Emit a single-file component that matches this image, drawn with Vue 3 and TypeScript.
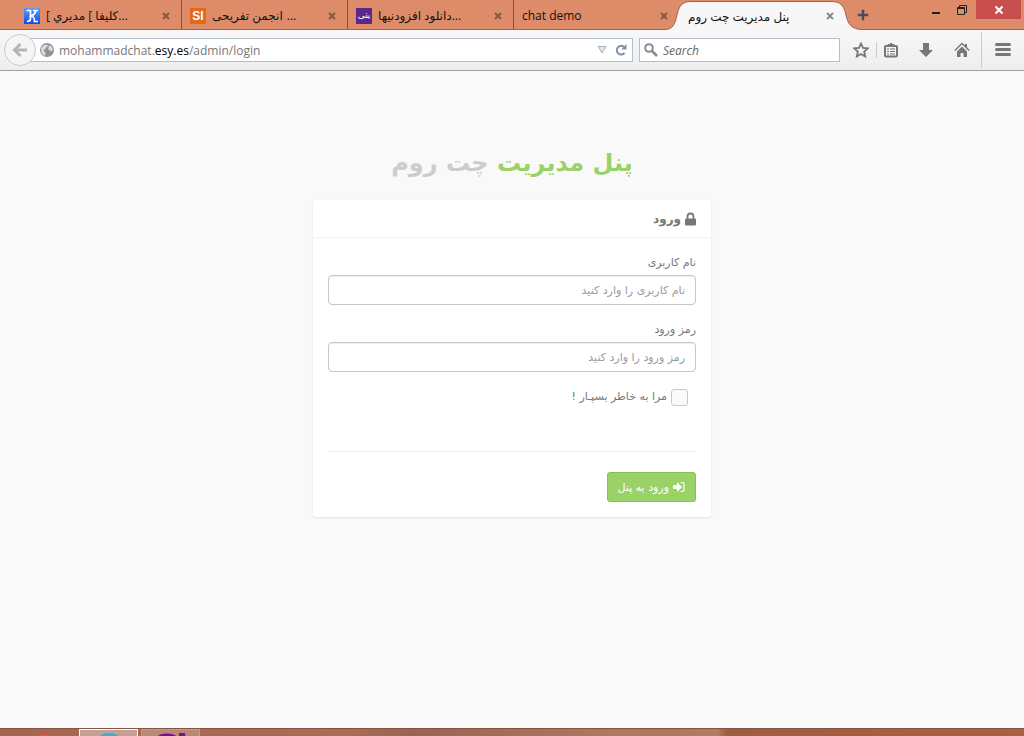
<script setup lang="ts">
import { ref } from 'vue'

interface Tab {
  id: string
  lead: string
  title: string
  more: boolean
  rtl: boolean
}

const tabs: Tab[] = [
  { id: 'k', lead: '[ ', title: 'كليفا ] مديري', more: true, rtl: true },
  { id: 'si', lead: '', title: 'انجمن تفریحی', more: true, rtl: true },
  { id: 'dl', lead: '', title: 'دانلود افزودنیها', more: true, rtl: true },
  { id: 'demo', lead: '', title: 'chat demo', more: false, rtl: false },
]

const username = ref('')
const password = ref('')
const remember = ref(false)
const query = ref('')
</script>

<template>
  <div class="screen">
    <header class="tabbar">
      <nav class="tabs" aria-label="Tabs">
        <div v-for="tab in tabs" :key="tab.id" class="tab">
          <svg v-if="tab.id === 'k'" class="favicon" viewBox="0 0 16 16" aria-hidden="true">
            <defs>
              <linearGradient id="blue" x1="0" y1="0" x2="0" y2="1">
                <stop offset="0" stop-color="#5f9cf0" />
                <stop offset="1" stop-color="#0a4cf5" />
              </linearGradient>
            </defs>
            <rect width="16" height="16" fill="url(#blue)" />
            <path d="M2.500 2.500h4v8q0 3-3.500 3M9 2.500h5M12 2.500q-1 4-4.500 5.500q3 .5 3 5.500h3.500" fill="none" stroke="#fff" stroke-width="1.700" />
          </svg>
          <span v-else-if="tab.id === 'si'" class="favicon orange">SI</span>
          <span v-else-if="tab.id === 'dl'" class="favicon violet" dir="rtl">یتی</span>
          <a class="title" href="#">{{ tab.lead }}<bdi :dir="tab.rtl ? 'rtl' : 'ltr'">{{ tab.title }}</bdi><span v-if="tab.more" :class="{ gap: tab.id === 'si' }">...</span></a>
          <button class="close" type="button" aria-label="Close tab">
            <svg viewBox="0 0 8 8"><path d="M1 1l6 6M7 1L1 7" /></svg>
          </button>
        </div>
        <div class="tab active">
          <svg class="shape" viewBox="0 0 200 30" aria-hidden="true">
            <path d="M0 30V29.500C8 29.500 10 24 12 15C14 6 17 1.500 26 1.500H166C176 1.500 179 6 181 15C183 24 186 29.500 198 29.500V30Z" fill="#f7f7f7" />
            <path d="M0 29.500C8 29.500 10 24 12 15C14 6 17 1.500 26 1.500H166C176 1.500 179 6 181 15C183 24 186 29.500 198 29.500" fill="none" stroke="#a3644c" />
          </svg>
          <a class="title" href="#"><bdi dir="rtl">پنل مدیریت چت روم</bdi></a>
          <button class="close" type="button" aria-label="Close tab">
            <svg viewBox="0 0 8 8"><path d="M1 1l6 6M7 1L1 7" /></svg>
          </button>
        </div>
      </nav>
      <button class="newtab" type="button" aria-label="New tab">
        <svg viewBox="0 0 12 12"><path d="M6 .5v11M.5 6h11" stroke="#9a7060" stroke-width="3" /><path d="M6 1v10M1 6h10" stroke="#405062" stroke-width="2" /></svg>
      </button>
      <div class="window-controls">
        <button type="button" aria-label="Minimize"><svg viewBox="0 0 12 12"><path d="M2 9h8" stroke="#222" stroke-width="2" /></svg></button>
        <button type="button" aria-label="Restore"><svg viewBox="0 0 12 12"><path d="M1.500 3.500h7v7h-7zM3.500 3V1.500h7v7H9M1 4.500h8" fill="none" stroke="#222" /></svg></button>
        <button class="quit" type="button" aria-label="Close"><svg viewBox="0 0 12 12"><path d="M2.500 2.500l7 7M9.500 2.500l-7 7" stroke="#fff" stroke-width="2" /></svg></button>
      </div>
    </header>

    <div class="toolbar">
      <button class="back" type="button" aria-label="Back">
        <svg viewBox="0 0 16 16"><path d="M15 8H3M8.500 2L2.500 8l6 6" fill="none" stroke="#b5b5b5" stroke-width="3" /></svg>
      </button>
      <div class="address">
        <svg class="globe" viewBox="0 0 14 14" aria-hidden="true">
          <circle cx="7" cy="7" r="7" fill="#929292" />
          <path d="M1 5l3-3 3-.5 1 1.500-2 1.500-1 2-2 .5 2 2 .5 2-1 2-3-3zM9 2l3 2 1 3-2 1.500-2-2-1 .5 .500-2z" fill="#ddd" />
        </svg>
        <a class="url" href="#">mohammadchat.<b>esy.es</b>/admin/login</a>
        <button class="drop" type="button" aria-label="History"><svg viewBox="0 0 10 8"><path d="M1 .5h8L5 7z" fill="#e2e5eb" stroke="#aab1bd" /></svg></button>
        <button class="reload" type="button" aria-label="Reload"><svg viewBox="0 0 12 12"><path d="M9.500 8.800A4.300 4.300 0 1 1 9 3" fill="none" stroke="#8291a3" stroke-width="2" /><path d="M11.500 0v5.500H6z" fill="#8291a3" /></svg></button>
      </div>
      <label class="search">
        <svg viewBox="0 0 14 14" aria-hidden="true"><circle cx="5" cy="5" r="3.800" fill="none" stroke="#8c8c8c" stroke-width="2" /><path d="M8 8l5 5" stroke="#8c8c8c" stroke-width="2.600" /></svg>
        <input v-model="query" type="text" placeholder="Search" aria-label="Search" />
      </label>
      <div class="tools">
        <button type="button" aria-label="Bookmark"><svg viewBox="0 0 16 16"><path d="M8 1.500l2 4.400 4.800.5-3.600 3.200 1 4.900L8 12l-4.200 2.500 1-4.900L1.200 6.400 6 5.900z" fill="none" stroke="#73787d" stroke-width="1.800" /></svg></button>
        <i class="thin"></i>
        <button type="button" aria-label="Bookmarks list"><svg viewBox="0 0 16 16"><rect x="2" y="4" width="12" height="10.500" rx="1" fill="#f3f3f3" stroke="#73787d" stroke-width="2" /><path d="M5 4V2.500h1.500L8 1l1.500 1.500H11V4z" fill="#73787d" stroke="#73787d" /><path d="M4 7h2M7 7h5M4 9.500h2M7 9.500h5M4 12h2M7 12h5" stroke="#73787d" stroke-width="1.200" /></svg></button>
        <button class="downloads" type="button" aria-label="Downloads"><svg viewBox="0 0 16 16"><path d="M5 1h6v7h4l-7 7-7-7h4z" fill="#73787d" /></svg></button>
        <button type="button" aria-label="Home"><svg viewBox="0 0 16 16"><path d="M.8 8.500L8 1.500l7.200 7" fill="none" stroke="#73787d" stroke-width="1.400" /><path d="M3 9.500l5-5 5 5V15H9.500v-4h-3v4H3zM11 2h2v4l-2-2z" fill="#73787d" /></svg></button>
        <i class="tall"></i>
        <button type="button" aria-label="Menu"><svg viewBox="0 0 16 16"><path d="M1.500 2.500h13M1.500 7.500h13M1.500 12.500h13" stroke="#73787d" stroke-width="3" stroke-linecap="round" /></svg></button>
      </div>
    </div>

    <main class="page" dir="rtl">
      <h1><strong>پنل مدیریت</strong> چت روم</h1>
      <form class="card" @submit.prevent>
        <h2>
          <svg viewBox="0 0 11 14" aria-hidden="true"><path d="M2.500 7V4.500a3 3 0 0 1 6 0V7" fill="none" stroke="#777" stroke-width="1.800" /><rect y="6.500" width="11" height="7" rx="1" fill="#777" /></svg>
          ورود
        </h2>
        <div class="body">
          <label for="user">نام کاربری</label>
          <input id="user" v-model="username" class="field" type="text" placeholder="نام کاربری را وارد کنید" />
          <label for="pass">رمز ورود</label>
          <input id="pass" v-model="password" class="field" type="password" placeholder="رمز ورود را وارد کنید" />
          <label class="remember"><input v-model="remember" type="checkbox" />مرا به خاطر بسپـار !</label>
          <hr />
          <button class="submit" type="submit">
            <svg viewBox="0 0 12 12" aria-hidden="true"><path d="M0 4h4V1l5 5-5 5V8H0z" fill="#fff" /><path d="M7.500 1.500H9.500a1.500 1.500 0 0 1 1.500 1.500v6a1.500 1.500 0 0 1-1.500 1.500H7.500" fill="none" stroke="#fff" stroke-width="1.200" /></svg>
            ورود به پنل
          </button>
        </div>
      </form>
    </main>

    <footer class="taskbar" aria-label="Taskbar">
      <div class="task"><svg viewBox="0 0 58 8"><ellipse cx="28" cy="10" rx="9" ry="5" fill="#e0574a" /></svg></div>
      <div class="task current"><svg viewBox="0 0 58 8"><ellipse cx="29" cy="11" rx="12" ry="8" fill="#38aee0" /></svg></div>
      <div class="task open"><svg viewBox="0 0 58 8"><path d="M14 8c3-6 19-6 22 0zM37 3h6v2l2 3h-8z" fill="#7b0c95" /></svg></div>
    </footer>
  </div>
</template>

<style>
body {
  margin: 0;
}
</style>

<style scoped>
* {
  box-sizing: border-box;
}
.screen {
  display: flex;
  flex-direction: column;
  min-height: 100vh;
  background: #f9f9f9;
  font-family: "Open Sans", "Noto Sans", "DejaVu Sans", sans-serif;
  font-size: 12px;
}
button {
  display: flex;
  align-items: center;
  justify-content: center;
  padding: 0;
  border: 0;
  background: none;
}
a {
  color: inherit;
  text-decoration: none;
}
.tabbar {
  display: flex;
  height: 30px;
  padding-left: 16px;
  background: #de8b69;
  border-bottom: 1px solid #a3644c;
}
.tabs {
  display: flex;
}
.tab {
  display: flex;
  align-items: center;
  width: 166px;
  height: 29px;
  padding: 2px 11px 0 8px;
  border-right: 1px solid #7b5447;
  color: #111;
}
.tab:nth-child(4) {
  width: 162px;
  padding-right: 8px;
  border-right: 0;
}
.tab.active {
  position: relative;
  width: 176px;
  height: 30px;
  margin-left: -4px;
  padding: 2px 14px 0 16px;
  border: 0;
}
.shape {
  position: absolute;
  top: 0;
  left: -7px;
  width: 200px;
  height: 30px;
}
.active .title,
.active .close {
  position: relative;
}
.favicon {
  flex: none;
  width: 16px;
  height: 16px;
  margin-right: 6px;
  overflow: hidden;
  color: #fff;
  text-align: center;
}
.orange {
  background: #e36a17;
  font: bold 12px/16px "Liberation Sans", sans-serif;
}
.violet {
  background: #5b2789;
  font: 9px/14px "DejaVu Sans", sans-serif;
}
.title {
  flex: 1;
  white-space: nowrap;
}
.gap {
  margin-left: 4px;
}
.close svg {
  width: 8px;
  height: 8px;
  fill: none;
  stroke: #825846;
  stroke-width: 2;
}
.active .close svg {
  stroke: #818b98;
}
.newtab {
  z-index: 1;
  width: 12px;
  margin-left: 9px;
}
.newtab svg {
  width: 12px;
}
.window-controls {
  display: flex;
  align-items: flex-start;
  margin-left: auto;
  margin-right: 3px;
}
.window-controls button {
  width: 26px;
  height: 19px;
}
.window-controls svg {
  width: 12px;
  height: 12px;
}
.window-controls .quit {
  width: 45px;
  margin-left: 1px;
  background: #c94f4f;
}
.toolbar {
  display: flex;
  align-items: center;
  height: 41px;
  padding: 0 10px 0 4px;
  background: linear-gradient(#f7f7f7, #eeeeee);
  border-bottom: 1px solid #a0a0a0;
}
.back {
  z-index: 1;
  width: 32px;
  height: 32px;
  border: 1px solid #cbcbcb;
  border-radius: 50%;
  background: #f5f5f5;
}
.back svg {
  width: 16px;
}
.address,
.search {
  display: flex;
  align-items: center;
  height: 24px;
  border: 1px solid #b3bfca;
  background: #fff;
}
.address {
  flex: 1;
  gap: 8px;
  margin-left: -6px;
  padding: 0 5px 0 9px;
}
.globe {
  width: 14px;
}
.url {
  flex: 1;
  margin-left: -3px;
  color: #777;
}
.url b {
  color: #000;
  font-weight: 400;
}
.drop svg {
  width: 10px;
}
.reload svg {
  width: 12px;
}
.search {
  gap: 5px;
  width: 201px;
  margin-left: 6px;
  padding: 0 4px;
}
.search svg {
  flex: none;
  width: 14px;
}
.search input {
  flex: 1;
  min-width: 0;
  padding: 0;
  border: 0;
  outline: 0;
  background: none;
  font: italic 12px "Open Sans", sans-serif;
}
.search input::placeholder {
  color: #666;
}
.tools {
  display: flex;
  align-items: center;
  margin-left: 13px;
}
.tools button {
  width: 16px;
  margin-right: 19px;
}
.tools svg {
  width: 16px;
  height: 16px;
}
.tools button:first-child {
  margin-right: 7px;
}
.tools .downloads {
  margin-right: 20px;
}
.tools button:last-child {
  margin-right: 3px;
}
.thin {
  width: 1px;
  height: 16px;
  margin-right: 6px;
  background: #c5ccd4;
}
.tall {
  width: 1px;
  height: 36px;
  margin: 0 13px 0 -8px;
  background: #c8cdd2;
}
.page {
  flex: 1;
  padding: 72px 16px 0;
  color: #777;
  font-family: "DejaVu Sans", sans-serif;
}
h1 {
  margin: 0;
  color: #ccc;
  font-size: 24px;
  font-weight: 700;
  line-height: 40px;
  text-align: center;
}
h1 strong {
  color: #99d269;
}
.card {
  max-width: 398px;
  margin: 17px auto 0;
  border-radius: 3px;
  background: #fff;
  box-shadow: 0 1px 2px #e4e4ea;
}
h2 {
  display: flex;
  align-items: center;
  gap: 4px;
  height: 38px;
  margin: 0;
  padding: 0 15px;
  border-bottom: 1px solid #f1f2f7;
  font-size: 12px;
}
h2 svg {
  width: 11px;
  height: 14px;
}
.body {
  padding: 15px;
}
.body label {
  display: block;
  height: 22px;
  font-size: 11px;
  line-height: 20px;
}
.field {
  display: block;
  width: 100%;
  height: 30px;
  margin-bottom: 15px;
  padding: 0 10px;
  border: 1px solid #c6c6c6;
  border-radius: 4px;
  background: #fff;
  box-shadow: inset 0 1px 1px #eee;
  font: 11px "DejaVu Sans", sans-serif;
}
.field::placeholder {
  color: #999;
}
.body .remember {
  display: flex;
  align-items: center;
  gap: 4px;
  height: 20px;
  margin-bottom: 44px;
  padding: 0 8px;
}
.remember input {
  appearance: none;
  width: 17px;
  height: 17px;
  margin: 0;
  border: 1px solid #c8c8c8;
  border-radius: 3px;
  background: #fafafa;
}
hr {
  margin: 0 0 20px;
  border: 0;
  border-top: 1px solid #eee;
}
.submit {
  gap: 4px;
  height: 30px;
  padding: 0 10px;
  border: 1px solid #83c44b;
  border-radius: 3px;
  background: #9ad268;
  color: #fff;
  font: 11px "DejaVu Sans", sans-serif;
}
.submit svg {
  width: 12px;
}
.taskbar {
  display: flex;
  gap: 3px;
  height: 8px;
  padding-left: 17px;
  border-top: 1px solid #845345;
  background: linear-gradient(90deg, #a36750, #aa6d52 34%, #966653 40%, #ae795e 60%, #ad785c 66%, #b37e64 70%, #9f5d40 71%, #aa6041);
}
.task {
  flex: none;
  width: 59px;
  overflow: hidden;
}
.task svg {
  display: block;
  width: 58px;
  height: 8px;
}
.current {
  border: 1px solid #fff;
  border-bottom: 0;
  background: #c4a093;
}
.open {
  border: 1px solid #c29c8b;
  border-bottom: 0;
  background: #b88a76;
}
</style>
